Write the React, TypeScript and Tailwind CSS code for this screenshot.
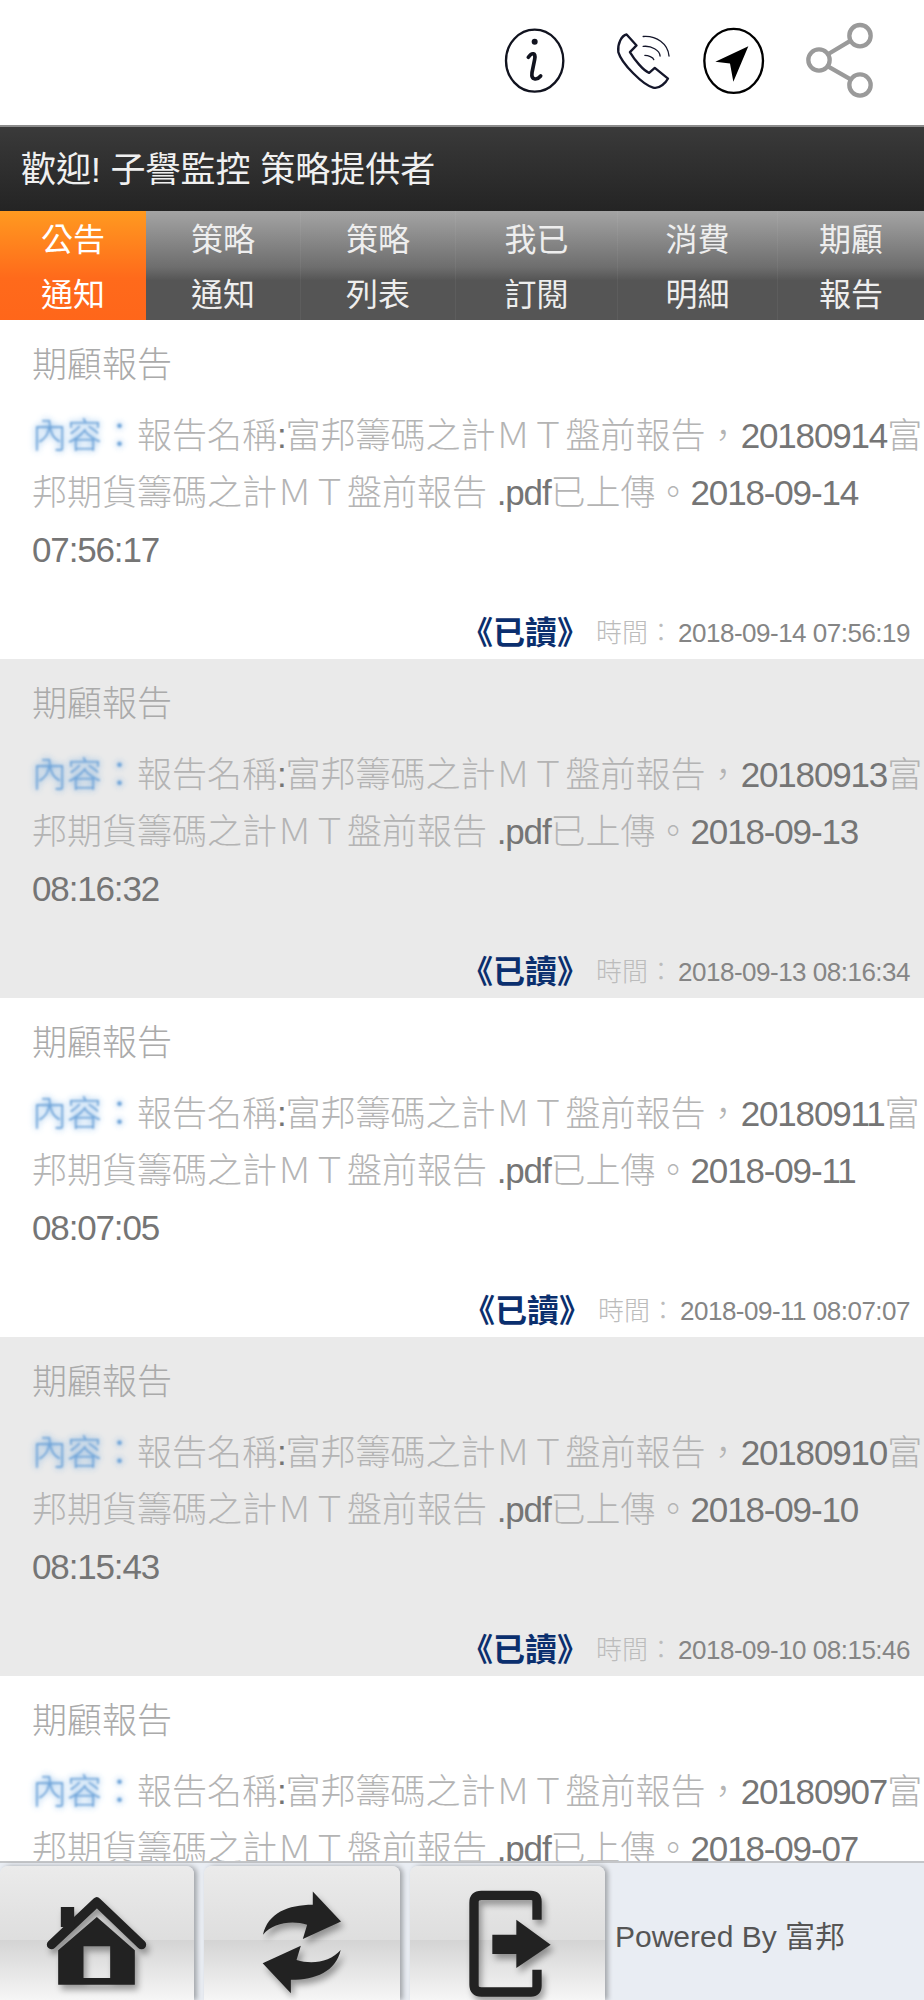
import React from "react";

const FONT = "font-['Liberation_Sans','Noto_Sans_CJK_TC',sans-serif]";

function L({ children }: { children: React.ReactNode }) {
  return <span className="text-[#757575] tracking-[-1.15px]">{children}</span>;
}

const rows = [
  { code: "20180914", date: "2018-09-14", time: "07:56:17", at: "2018-09-14 07:56:19" },
  { code: "20180913", date: "2018-09-13", time: "08:16:32", at: "2018-09-13 08:16:34" },
  { code: "20180911", date: "2018-09-11", time: "08:07:05", at: "2018-09-11 08:07:07" },
  { code: "20180910", date: "2018-09-10", time: "08:15:43", at: "2018-09-10 08:15:46" },
  { code: "20180907", date: "2018-09-07", time: "08:05:11", at: "2018-09-07 08:05:13" },
];

const tabs = [
  ["公告", "通知"],
  ["策略", "通知"],
  ["策略", "列表"],
  ["我已", "訂閱"],
  ["消費", "明細"],
  ["期顧", "報告"],
];

function Row({ r, alt }: { r: (typeof rows)[number]; alt: boolean }) {
  return (
    <div className={`h-[339px] shrink-0 flex flex-col pt-[16px] ${alt ? "bg-[#eaeaea]" : "bg-white"}`}>
      <div className="pl-[32px] h-[57px] text-[35px] leading-[57px] text-[#aaaaaa] font-light">期顧報告</div>
      <div className="mt-[14px] pl-[32px] text-[35px] leading-[57px] text-[#b4b4b4] font-light whitespace-nowrap h-[171px] overflow-hidden">
        <span className="inline-block blur-[1px] text-[#6ea3d8] [text-shadow:0_0_6px_#5b9fdf]">內容：</span>
        報告名稱<L>:</L>富邦籌碼之計ＭＴ盤前報告，<L>{r.code}</L>富
        <br />
        邦期貨籌碼之計ＭＴ盤前報告 <L>.pdf</L>已上傳。<L>{r.date}</L>
        <br />
        <L>{r.time}</L>
      </div>
      <div className="mt-[35px] h-[40px] pr-[14px] flex items-center justify-end whitespace-nowrap">
        <span className="text-[32px] font-bold text-[#0b2f6e] mr-[7px]">《已讀》</span>
        <span className="text-[26px] font-light text-[#bcbcbc]">時間：</span>
        <span className="text-[26px] text-[#858585] tracking-[-0.5px] ml-[4px]">{r.at}</span>
      </div>
    </div>
  );
}

function FootButton({ children, w }: { children: React.ReactNode; w: string }) {
  return (
    <div
      className={`${w} h-full rounded-t-lg flex items-center justify-center bg-[linear-gradient(#ebebeb,#dedede_55%,#d4d4d4_55%,#f6f6f6)] shadow-[3px_0_5px_rgba(0,0,0,0.3)]`}
    >
      {children}
    </div>
  );
}

export default function App() {
  return (
    <div className={`${FONT} w-[924px] h-[2000px] flex flex-col overflow-hidden bg-white`}>
      <div className="h-[125px] shrink-0 flex items-start justify-end pr-[49px] bg-white">
        <svg viewBox="70 75 195 210" className="w-[65px] h-[70px] mt-[25px]" fill="none" stroke="#11131f">
          <ellipse cx="168" cy="182" rx="86" ry="93" strokeWidth="7" />
          <circle cx="168" cy="125" r="9" fill="#11131f" stroke="none" />
          <path d="M149 172 C160 156 172 158 168 178 L160 218 C157 240 174 242 186 228" strokeWidth="11" strokeLinecap="round" />
        </svg>
        <svg viewBox="405 95 175 180" className="w-[58px] h-[60px] ml-[48px] mt-[32px]" fill="none" stroke="#14162a" strokeWidth="7" strokeLinejoin="round" strokeLinecap="round">
          <path d="M440 102 C425 105 412 130 415 155 C425 190 490 255 520 262 C540 268 560 245 565 235 L525 203 L508 218 C490 210 465 180 450 155 L470 135 Z" />
          <path d="M490 108 C530 105 565 130 568 167" strokeWidth="4" />
          <path d="M490 138 C515 135 540 150 541 167" strokeWidth="4" />
          <path d="M495 165 C505 165 520 170 522 178" strokeWidth="4" />
        </svg>
        <svg viewBox="665 75 195 215" className="w-[65px] h-[72px] ml-[28px] mt-[25px]">
          <ellipse cx="763" cy="182" rx="88" ry="96" fill="none" stroke="#000" strokeWidth="7" />
          <polygon points="807,138 708,185 752,190 762,245" fill="#000" />
        </svg>
        <svg viewBox="975 60 210 240" className="w-[70px] h-[80px] ml-[39px] mt-[20px] blur-[0.5px]" fill="none" stroke="#9a9a9a" strokeWidth="13">
          <circle cx="1140" cy="107" r="32" />
          <circle cx="1017" cy="180" r="32" />
          <circle cx="1140" cy="255" r="32" />
          <path d="M1045 162 L1112 122 M1045 200 L1112 238" />
        </svg>
      </div>

      <div className="h-[86px] shrink-0 border-t-2 border-[#8c8c8c] bg-[linear-gradient(#3a3a3a,#333333_30%,#242424)] pl-[21px] pt-[3px] flex items-center text-[35px] text-[#f0f0f0] whitespace-nowrap">
        歡迎! 子譽監控 策略提供者
      </div>

      <div className="h-[109px] shrink-0 grid grid-cols-[146px_155px_155px_162px_160px_146px] border-b border-[#cccccc]">
        {tabs.map((t, i) => (
          <div
            key={i}
            className={`flex flex-col items-center justify-center pt-[2px] text-[32px] leading-[55px] ${
              i === 0
                ? "bg-[linear-gradient(#ff9a20,#ff6a1b_60%,#ff661a)] text-white"
                : "bg-[linear-gradient(#a4a4a4,#6e6e6e_50%,#555555_62%,#555555)] text-[#eeeeee] border-r border-[rgba(255,255,255,0.05)] last:border-r-0"
            }`}
          >
            <span>{t[0]}</span>
            <span>{t[1]}</span>
          </div>
        ))}
      </div>

      <div className="flex-1 min-h-0 overflow-hidden flex flex-col">
        {rows.map((r, i) => (
          <Row key={r.code} r={r} alt={i % 2 === 1} />
        ))}
      </div>

      <div className="h-[139px] shrink-0 border-t-2 border-[#c4c6c9] bg-[#e9edf3] pt-[3px] flex gap-[10px]">
        <FootButton w="w-[194px]">
          <svg viewBox="130 220 320 300" className="w-[107px] h-[100px] mt-[20px] drop-shadow-[3px_5px_3px_rgba(0,0,0,0.35)]">
            <path d="M152 375 L288 247 L422 375" fill="none" stroke="#222222" strokeWidth="28" strokeLinecap="round" strokeLinejoin="round" />
            <rect x="180" y="262" width="40" height="60" fill="#222222" />
            <path fillRule="evenodd" fill="#222222" d="M172 392 L288 292 L402 392 L402 495 L172 495 Z M248 380 L248 475 L328 475 L328 380 Z" />
          </svg>
        </FootButton>
        <FootButton w="w-[196px]">
          <svg viewBox="770 205 265 330" className="w-[88px] h-[110px] mt-[20px] drop-shadow-[3px_5px_3px_rgba(0,0,0,0.35)]" fill="#222222">
            <path d="M785 345 C800 280 860 255 935 255 L935 215 L1020 305 L905 358 L918 315 C870 300 815 310 785 345 Z" />
            <path d="M785 345 C800 280 860 255 935 255 L935 215 L1020 305 L905 358 L918 315 C870 300 815 310 785 345 Z" transform="rotate(180 902 368)" />
          </svg>
        </FootButton>
        <FootButton w="w-[195px]">
          <svg viewBox="20 200 255 330" className="w-[85px] h-[110px] mt-[20px] ml-[6px] drop-shadow-[3px_5px_3px_rgba(0,0,0,0.35)]">
            <path d="M227 295 L227 240 Q227 222 209 222 L60 222 Q38 222 38 244 L38 490 Q38 512 60 512 L209 512 Q227 512 227 494 L227 445" fill="none" stroke="#222222" strokeWidth="28" />
            <path d="M93 340 L165 340 L165 295 L268 370 L165 440 L165 398 L93 398 Z" fill="#222222" />
          </svg>
        </FootButton>
        <div className="flex-1 flex items-center text-[30px] text-[#555555] pt-[6px] whitespace-nowrap">Powered By 富邦</div>
      </div>
    </div>
  );
}
